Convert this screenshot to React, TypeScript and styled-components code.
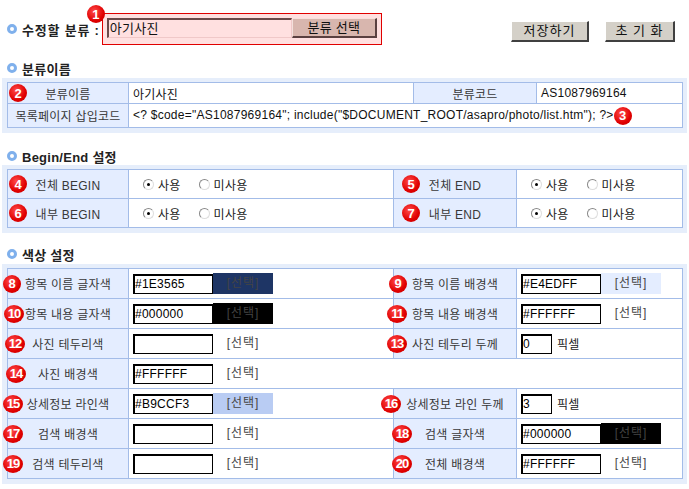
import React from "react";
import styled, { createGlobalStyle } from "styled-components";

const GlobalStyle = createGlobalStyle`
  body {
    margin: 0;
    background: #fff;
    font-family: "Liberation Sans", "Noto Sans CJK KR", sans-serif;
    font-size: 12px;
    letter-spacing: 0.25px;
    color: #222;
  }
`;

const Page = styled.div`
  width: 689px;
  padding: 0 2px;
  box-sizing: border-box;
`;

const TopBar = styled.div`
  display: flex;
  align-items: flex-start;
  padding-top: 13px;
  height: 32px;
`;

const Bullet = styled.span`
  display: inline-block;
  width: 10px;
  height: 10px;
  box-sizing: border-box;
  border-radius: 50%;
  border: 3px solid #7fb0ec;
  background: #fff;
  margin: 0 5px 0 5px;
  flex-shrink: 0;
`;

const TopLabel = styled.div`
  display: flex;
  align-items: center;
  height: 32px;
  font-size: 13px;
  font-weight: bold;
  letter-spacing: 0.8px;
  color: #222;
`;

const PickBox = styled.div`
  position: relative;
  display: flex;
  margin-left: 2px;
  padding: 4px 4px 6px 4px;
  width: 280px;
  height: 32px;
  box-sizing: border-box;
  background: #ffe0e0;
  border: 1px solid #e00000;
`;

const PickInput = styled.div`
  width: 186px;
  height: 20px;
  box-sizing: border-box;
  background: #ffe0e0;
  border-top: 2px solid #6a4a4a;
  border-left: 2px solid #6a4a4a;
  border-right: 1px solid #f0c8c8;
  border-bottom: 1px solid #f0c8c8;
  padding-left: 1px;
  font-size: 13px;
  line-height: 17px;
  color: #111;
`;

const PickButton = styled.div`
  width: 85px;
  height: 20px;
  box-sizing: border-box;
  background: #d8b6ae;
  border-top: 1px solid #f4e0dc;
  border-left: 1px solid #f4e0dc;
  border-right: 2px solid #5a4040;
  border-bottom: 2px solid #5a4040;
  text-align: center;
  font-size: 13px;
  line-height: 17px;
  color: #111;
`;

const Actions = styled.div`
  display: flex;
  gap: 16px;
  margin: 8px 12px 0 auto;
`;

const GrayButton = styled.div<{ $w: number }>`
  width: ${(p) => p.$w}px;
  height: 21px;
  box-sizing: border-box;
  background: #d4d0c8;
  border-top: 1px solid #fff;
  border-left: 1px solid #fff;
  border-right: 2px solid #404040;
  border-bottom: 2px solid #404040;
  text-align: center;
  font-size: 13px;
  line-height: 18px;
  letter-spacing: 1px;
  color: #111;
`;

const SectionTitle = styled.div<{ $top: number; $bottom: number }>`
  display: flex;
  align-items: center;
  height: 16px;
  margin-top: ${(p) => p.$top}px;
  margin-bottom: ${(p) => p.$bottom}px;
  font-size: 13px;
  font-weight: bold;
  color: #222;
`;

const Panel = styled.div`
  background: #e6eefb;
  padding: 4px 5px 5px 5px;
`;

const Grid = styled.table`
  width: 675px;
  border-collapse: collapse;
  table-layout: fixed;
  background: #fff;
`;

const Row = styled.tr<{ $h: number }>`
  height: ${(p) => p.$h}px;
`;

const LabelCell = styled.td`
  position: relative;
  border: 1px solid #a3bce8;
  background: #e4edff;
  text-align: center;
  padding: 0;
  color: #383838;
  font-size: 12px;
  white-space: nowrap;
`;

const ValueCell = styled.td`
  border: 1px solid #a3bce8;
  background: #fff;
  padding: 0 0 0 4px;
  color: #111;
  white-space: nowrap;
`;

const Badge = styled.span<{ $left?: number; $inline?: boolean; $wide?: boolean }>`
  position: ${(p) => (p.$inline ? "static" : "absolute")};
  left: ${(p) => p.$left ?? 0}px;
  top: 50%;
  transform: ${(p) => (p.$inline ? "none" : "translateY(-50%)")};
  display: inline-flex;
  align-items: center;
  justify-content: center;
  width: ${(p) => (p.$wide ? 20 : 18)}px;
  height: 18px;
  border-radius: 50%;
  background: radial-gradient(circle at 40% 35%, #ff4a4a 0%, #e00000 60%, #c00000 100%);
  color: #fff;
  font-family: "Liberation Sans", sans-serif;
  font-weight: bold;
  font-size: 13px;
  letter-spacing: ${(p) => (p.$wide ? "-1px" : "0")};
  vertical-align: middle;
`;

const TopBadge = styled(Badge)`
  left: -16px;
  top: -9px;
  transform: none;
`;

const RadioGroup = styled.div`
  display: flex;
  align-items: center;
  padding-left: 10px;
`;

const RadioItem = styled.span`
  display: inline-flex;
  align-items: center;
  gap: 4px;
  margin-right: 18px;
  font-size: 12px;
  color: #222;
`;

const RadioDot = styled.span<{ $on?: boolean }>`
  position: relative;
  display: inline-block;
  width: 11px;
  height: 11px;
  box-sizing: border-box;
  border-radius: 50%;
  border: 1px solid #888;
  border-right-color: #ddd;
  border-bottom-color: #ddd;
  background: #fff;
  &::after {
    content: "";
    display: ${(p) => (p.$on ? "block" : "none")};
    position: absolute;
    left: 3px;
    top: 3px;
    width: 3px;
    height: 3px;
    border-radius: 50%;
    background: #000;
  }
`;

const ColorField = styled.div`
  display: flex;
  align-items: center;
`;

const TextBox = styled.div<{ $w: number }>`
  width: ${(p) => p.$w}px;
  height: 20px;
  box-sizing: border-box;
  border: 1px solid #000;
  border-top-width: 2px;
  border-left-width: 2px;
  background: #fff;
  padding-left: 0;
  font-size: 12px;
  line-height: 17px;
  color: #000;
`;

const Swatch = styled.div<{ $bg: string }>`
  width: 60px;
  height: 21px;
  background: ${(p) => p.$bg};
  text-align: center;
  line-height: 21px;
  letter-spacing: 1px;
  color: #444;
`;

const Unit = styled.span`
  margin-left: 5px;
  color: #222;
`;

type Cell =
  | { n: number; label: string; kind: "color"; value: string; swatch: string; left: number }
  | { n: number; label: string; kind: "pixel"; value: string; left: number };

const colorRows: [Cell, Cell | null][] = [
  [
    { n: 8, label: "항목 이름 글자색", kind: "color", value: "#1E3565", swatch: "#1e3565", left: -5 },
    { n: 9, label: "항목 이름 배경색", kind: "color", value: "#E4EDFF", swatch: "#e4edff", left: -5 },
  ],
  [
    { n: 10, label: "항목 내용 글자색", kind: "color", value: "#000000", swatch: "#000", left: -4 },
    { n: 11, label: "항목 내용 배경색", kind: "color", value: "#FFFFFF", swatch: "#fff", left: -7 },
  ],
  [
    { n: 12, label: "사진 테두리색", kind: "color", value: "", swatch: "transparent", left: -3 },
    { n: 13, label: "사진 테두리 두께", kind: "pixel", value: "0", left: -7 },
  ],
  [{ n: 14, label: "사진 배경색", kind: "color", value: "#FFFFFF", swatch: "transparent", left: -2 }, null],
  [
    { n: 15, label: "상세정보 라인색", kind: "color", value: "#B9CCF3", swatch: "#b9ccf3", left: -5 },
    { n: 16, label: "상세정보 라인 두께", kind: "pixel", value: "3", left: -13 },
  ],
  [
    { n: 17, label: "검색 배경색", kind: "color", value: "", swatch: "transparent", left: -5 },
    { n: 18, label: "검색 글자색", kind: "color", value: "#000000", swatch: "#000", left: -2 },
  ],
  [
    { n: 19, label: "검색 테두리색", kind: "color", value: "", swatch: "transparent", left: -5 },
    { n: 20, label: "전체 배경색", kind: "color", value: "#FFFFFF", swatch: "transparent", left: -2 },
  ],
];

const Cols = ({ widths }: { widths: number[] }) => (
  <colgroup>
    {widths.map((w, i) => (
      <col key={i} style={{ width: w }} />
    ))}
  </colgroup>
);

const Field = ({ cell }: { cell: Cell }) =>
  cell.kind === "color" ? (
    <ColorField>
      <TextBox $w={80}>{cell.value}</TextBox>
      <Swatch $bg={cell.swatch}>[선택]</Swatch>
    </ColorField>
  ) : (
    <ColorField>
      <TextBox $w={31}>{cell.value}</TextBox>
      <Unit>픽셀</Unit>
    </ColorField>
  );

const Radios = () => (
  <RadioGroup>
    <RadioItem>
      <RadioDot $on />
      사용
    </RadioItem>
    <RadioItem>
      <RadioDot />
      미사용
    </RadioItem>
  </RadioGroup>
);

const App: React.FC = () => {
  return (
    <Page>
      <GlobalStyle />
      <TopBar>
        <TopLabel>
          <Bullet />
          수정할 분류 :
        </TopLabel>
        <PickBox>
          <TopBadge>1</TopBadge>
          <PickInput>아기사진</PickInput>
          <PickButton>분류 선택</PickButton>
        </PickBox>
        <Actions>
          <GrayButton $w={78}>저장하기</GrayButton>
          <GrayButton $w={70}>초 기 화</GrayButton>
        </Actions>
      </TopBar>

      {/* 분류이름 */}
      <SectionTitle $top={15} $bottom={2}>
        <Bullet />
        분류이름
      </SectionTitle>
      <Panel>
        <Grid>
          <Cols widths={[121, 285, 123, 146]} />
          <tbody>
            <Row $h={21}>
              <LabelCell>
                <Badge $left={1}>2</Badge>
                분류이름
              </LabelCell>
              <ValueCell>아기사진</ValueCell>
              <LabelCell>분류코드</LabelCell>
              <ValueCell>AS1087969164</ValueCell>
            </Row>
            <Row $h={24}>
              <LabelCell>목록페이지 삽입코드</LabelCell>
              <ValueCell colSpan={3}>
                {'<? $code="AS1087969164"; include("$DOCUMENT_ROOT/asapro/photo/list.htm"); ?>'}
                <Badge $inline>3</Badge>
              </ValueCell>
            </Row>
          </tbody>
        </Grid>
      </Panel>

      {/* Begin/End */}
      <SectionTitle $top={15} $bottom={1}>
        <Bullet />
        Begin/End 설정
      </SectionTitle>
      <Panel>
        <Grid>
          <Cols widths={[121, 265, 123, 166]} />
          <tbody>
            <Row $h={29}>
              <LabelCell>
                <Badge $left={1}>4</Badge>
                전체 BEGIN
              </LabelCell>
              <ValueCell>
                <Radios />
              </ValueCell>
              <LabelCell>
                <Badge $left={8}>5</Badge>
                전체 END
              </LabelCell>
              <ValueCell>
                <Radios />
              </ValueCell>
            </Row>
            <Row $h={29}>
              <LabelCell>
                <Badge $left={1}>6</Badge>
                내부 BEGIN
              </LabelCell>
              <ValueCell>
                <Radios />
              </ValueCell>
              <LabelCell>
                <Badge $left={8}>7</Badge>
                내부 END
              </LabelCell>
              <ValueCell>
                <Radios />
              </ValueCell>
            </Row>
          </tbody>
        </Grid>
      </Panel>

      {/* 색상 설정 */}
      <SectionTitle $top={13} $bottom={2}>
        <Bullet />
        색상 설정
      </SectionTitle>
      <Panel>
        <Grid>
          <Cols widths={[121, 265, 123, 166]} />
          <tbody>
            {colorRows.map(([a, b]) => (
              <Row $h={30} key={a.n}>
                <LabelCell>
                  <Badge $left={a.left} $wide={a.n > 9}>
                    {a.n}
                  </Badge>
                  {a.label}
                </LabelCell>
                <ValueCell colSpan={b ? 1 : 3}>
                  <Field cell={a} />
                </ValueCell>
                {b && (
                  <>
                    <LabelCell>
                      <Badge $left={b.left} $wide={b.n > 9}>
                        {b.n}
                      </Badge>
                      {b.label}
                    </LabelCell>
                    <ValueCell>
                      <Field cell={b} />
                    </ValueCell>
                  </>
                )}
              </Row>
            ))}
          </tbody>
        </Grid>
      </Panel>
    </Page>
  );
};

export default App;
